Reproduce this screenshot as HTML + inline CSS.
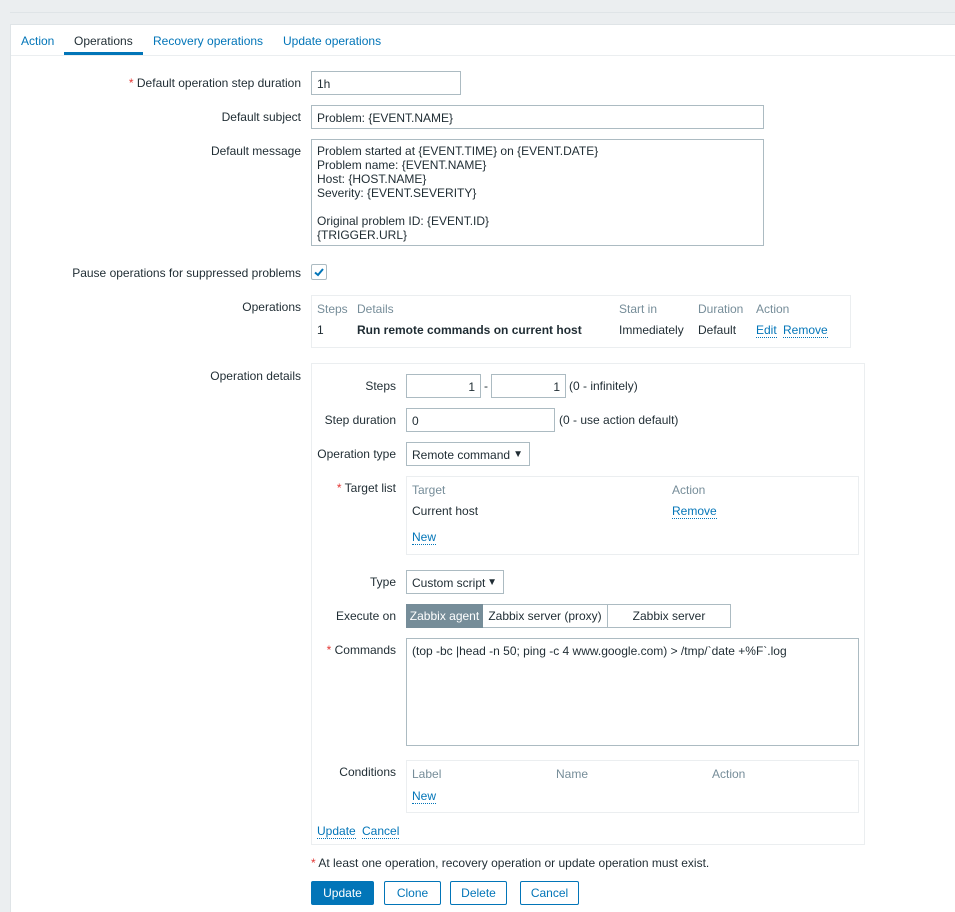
<!DOCTYPE html>
<html><head><meta charset="utf-8"><style>
*{box-sizing:border-box;margin:0;padding:0}
body{width:955px;height:912px;background:#ebeef0;font-family:"Liberation Sans",Arial,sans-serif;font-size:12px;color:#1f2c33;position:relative;overflow:hidden}
.a{position:absolute;white-space:nowrap;line-height:14px;margin-top:1px}
.r{text-align:right}
.l{color:#0275b8}
.u{border-bottom:1px dotted #0275b8}
.g{color:#768d99}
.box{position:absolute;border:1px solid #ebeef0;background:#fff}
.in{position:absolute;border:1px solid #acbbc2;background:#fff;padding:1px 5px 0;line-height:22px;white-space:nowrap}
.btn{position:absolute;border:1px solid #0275b8;border-radius:2px;color:#0275b8;text-align:center;line-height:23px;background:#fff}
.req:before{content:"* ";color:#e33734}
.ar{position:absolute;right:6px;top:1px;font-size:10px}
</style></head><body>
<div style="position:absolute;left:10px;top:12px;right:0;height:1px;background:#dfe4e7"></div>
<div style="position:absolute;left:10px;top:24px;right:0;bottom:0;background:#fff;border-left:1px solid #dfe4e7;border-top:1px solid #dfe4e7"></div>
<div style="position:absolute;left:11px;top:55px;right:0;height:1px;background:#ebeef0"></div>
<div class="a l" style="left:21px;top:33px">Action</div>
<div class="a" style="left:74px;top:33px">Operations</div>
<div style="position:absolute;left:64px;top:52px;width:79px;height:3px;background:#0275b8"></div>
<div class="a l" style="left:153px;top:33px">Recovery operations</div>
<div class="a l" style="left:283px;top:33px">Update operations</div>

<div class="a r req" style="right:654px;top:75px">Default operation step duration</div>
<div class="in" style="left:311px;top:71px;width:150px;height:24px">1h</div>
<div class="a r" style="right:654px;top:109px">Default subject</div>
<div class="in" style="left:311px;top:105px;width:453px;height:24px">Problem: {EVENT.NAME}</div>
<div class="a r" style="right:654px;top:143px">Default message</div>
<div class="in" style="left:311px;top:139px;width:453px;height:107px;line-height:14px;padding-top:4px">Problem started at {EVENT.TIME} on {EVENT.DATE}<br>Problem name: {EVENT.NAME}<br>Host: {HOST.NAME}<br>Severity: {EVENT.SEVERITY}<br><br>Original problem ID: {EVENT.ID}<br>{TRIGGER.URL}</div>
<div class="a r" style="right:654px;top:265px">Pause operations for suppressed problems</div>
<div style="position:absolute;left:311px;top:264px;width:16px;height:16px;border:1px solid #acbbc2;border-radius:2px"><svg width="14" height="14" style="position:absolute;left:0;top:0"><path d="M3 7.5L6 10L11 4" stroke="#0275b8" stroke-width="2" fill="none"/></svg></div>

<div class="a r" style="right:654px;top:299px">Operations</div>
<div class="box" style="left:311px;top:295px;width:540px;height:53px"></div>
<div class="a g" style="left:317px;top:301px">Steps</div>
<div class="a g" style="left:357px;top:301px">Details</div>
<div class="a g" style="left:619px;top:301px">Start in</div>
<div class="a g" style="left:698px;top:301px">Duration</div>
<div class="a g" style="left:756px;top:301px">Action</div>
<div class="a" style="left:317px;top:322px">1</div>
<div class="a" style="left:357px;top:322px;font-weight:bold">Run remote commands on current host</div>
<div class="a" style="left:619px;top:322px">Immediately</div>
<div class="a" style="left:698px;top:322px">Default</div>
<div class="a l u" style="left:756px;top:322px">Edit</div>
<div class="a l u" style="left:783px;top:322px">Remove</div>

<div class="a r" style="right:654px;top:368px">Operation details</div>
<div class="box" style="left:311px;top:363px;width:554px;height:482px"></div>
<div class="a r" style="right:559px;top:378px">Steps</div>
<div class="in" style="left:406px;top:374px;width:75px;height:24px;text-align:right">1</div>
<div class="a" style="left:484px;top:378px">-</div>
<div class="in" style="left:491px;top:374px;width:75px;height:24px;text-align:right">1</div>
<div class="a" style="left:569px;top:378px">(0 - infinitely)</div>
<div class="a r" style="right:559px;top:412px">Step duration</div>
<div class="in" style="left:406px;top:408px;width:149px;height:24px">0</div>
<div class="a" style="left:559px;top:412px">(0 - use action default)</div>
<div class="a r" style="right:559px;top:446px">Operation type</div>
<div class="in" style="left:406px;top:442px;width:124px;height:24px">Remote command<span class="ar">▼</span></div>
<div class="a r req" style="right:559px;top:480px">Target list</div>
<div class="box" style="left:406px;top:476px;width:453px;height:79px"></div>
<div class="a g" style="left:412px;top:482px">Target</div>
<div class="a g" style="left:672px;top:482px">Action</div>
<div class="a" style="left:412px;top:503px">Current host</div>
<div class="a l u" style="left:672px;top:503px">Remove</div>
<div class="a l u" style="left:412px;top:529px">New</div>
<div class="a r" style="right:559px;top:574px">Type</div>
<div class="in" style="left:406px;top:570px;width:98px;height:24px">Custom script<span class="ar">▼</span></div>
<div class="a r" style="right:559px;top:608px">Execute on</div>
<div style="position:absolute;left:406px;top:604px;width:325px;height:24px;border:1px solid #acbbc2;line-height:23px">
<span style="position:absolute;left:-1px;top:-1px;width:77px;height:24px;background:#768d99;color:#fff;text-align:center;line-height:25px">Zabbix agent</span>
<span style="position:absolute;left:76px;top:0;width:125px;height:22px;text-align:center;border-right:1px solid #acbbc2">Zabbix server (proxy)</span>
<span style="position:absolute;left:201px;top:0;width:122px;text-align:center">Zabbix server</span></div>
<div class="a r req" style="right:559px;top:642px">Commands</div>
<div class="in" style="left:406px;top:638px;width:453px;height:108px;line-height:14px;padding-top:5px">(top -bc |head -n 50; ping -c 4 www.google.com) &gt; /tmp/`date +%F`.log</div>
<div class="a r" style="right:559px;top:764px">Conditions</div>
<div class="box" style="left:406px;top:760px;width:453px;height:53px"></div>
<div class="a g" style="left:412px;top:766px">Label</div>
<div class="a g" style="left:556px;top:766px">Name</div>
<div class="a g" style="left:712px;top:766px">Action</div>
<div class="a l u" style="left:412px;top:788px">New</div>
<div class="a l u" style="left:317px;top:823px">Update</div>
<div class="a l u" style="left:362px;top:823px">Cancel</div>

<div class="a req" style="left:311px;top:855px">At least one operation, recovery operation or update operation must exist.</div>
<div class="btn" style="left:311px;top:881px;width:63px;height:24px;background:#0275b8;color:#fff">Update</div>
<div class="btn" style="left:384px;top:881px;width:57px;height:24px">Clone</div>
<div class="btn" style="left:450px;top:881px;width:57px;height:24px">Delete</div>
<div class="btn" style="left:520px;top:881px;width:59px;height:24px">Cancel</div>
</body></html>
